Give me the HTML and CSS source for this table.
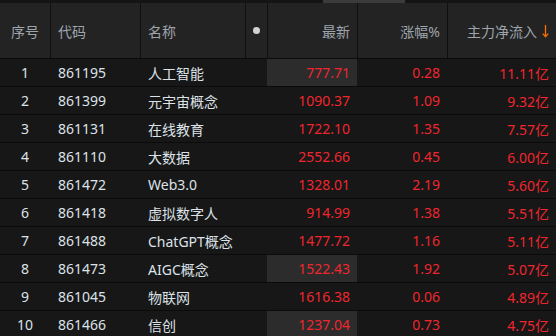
FILE: index.html
```html
<!DOCTYPE html>
<html lang="zh">
<head>
<meta charset="utf-8">
<link rel="stylesheet" href="styles.css">
</head>
<body>
<div class="board">
  <div class="hscroll"><div class="thumb"></div></div>
  <div class="row head">
    <div class="c c-idx">序号</div>
    <div class="c c-code sep">代码</div>
    <div class="c c-name sep">名称</div>
    <div class="c c-dot sep"><span class="dot"></span></div>
    <div class="c c-num sep">最新</div>
    <div class="c c-num sep">涨幅%</div>
    <div class="c c-num sep">主力净流入<svg class="arrow" width="7" height="14" viewBox="0 0 7 14"><path d="M3.5 1 V12.5 M0.8 9.6 L3.5 12.8 L6.2 9.6" fill="none" stroke="#ff6d00" stroke-width="1.3"/></svg></div>
  </div>
  <div class="row"><div class="c c-idx">1</div><div class="c c-code">861195</div><div class="c c-name">人工智能</div><div class="c c-dot"></div><div class="c c-num up hl">777.71</div><div class="c c-num up">0.28</div><div class="c c-num up">11.11亿</div></div>
  <div class="row"><div class="c c-idx">2</div><div class="c c-code">861399</div><div class="c c-name">元宇宙概念</div><div class="c c-dot"></div><div class="c c-num up">1090.37</div><div class="c c-num up">1.09</div><div class="c c-num up">9.32亿</div></div>
  <div class="row"><div class="c c-idx">3</div><div class="c c-code">861131</div><div class="c c-name">在线教育</div><div class="c c-dot"></div><div class="c c-num up">1722.10</div><div class="c c-num up">1.35</div><div class="c c-num up">7.57亿</div></div>
  <div class="row"><div class="c c-idx">4</div><div class="c c-code">861110</div><div class="c c-name">大数据</div><div class="c c-dot"></div><div class="c c-num up">2552.66</div><div class="c c-num up">0.45</div><div class="c c-num up">6.00亿</div></div>
  <div class="row"><div class="c c-idx">5</div><div class="c c-code">861472</div><div class="c c-name">Web3.0</div><div class="c c-dot"></div><div class="c c-num up">1328.01</div><div class="c c-num up">2.19</div><div class="c c-num up">5.60亿</div></div>
  <div class="row"><div class="c c-idx">6</div><div class="c c-code">861418</div><div class="c c-name">虚拟数字人</div><div class="c c-dot"></div><div class="c c-num up">914.99</div><div class="c c-num up">1.38</div><div class="c c-num up">5.51亿</div></div>
  <div class="row"><div class="c c-idx">7</div><div class="c c-code">861488</div><div class="c c-name">ChatGPT概念</div><div class="c c-dot"></div><div class="c c-num up">1477.72</div><div class="c c-num up">1.16</div><div class="c c-num up">5.11亿</div></div>
  <div class="row"><div class="c c-idx">8</div><div class="c c-code">861473</div><div class="c c-name">AIGC概念</div><div class="c c-dot"></div><div class="c c-num up hl">1522.43</div><div class="c c-num up">1.92</div><div class="c c-num up">5.07亿</div></div>
  <div class="row"><div class="c c-idx">9</div><div class="c c-code">861045</div><div class="c c-name">物联网</div><div class="c c-dot"></div><div class="c c-num up">1616.38</div><div class="c c-num up">0.06</div><div class="c c-num up">4.89亿</div></div>
  <div class="row"><div class="c c-idx">10</div><div class="c c-code">861466</div><div class="c c-name">信创</div><div class="c c-dot"></div><div class="c c-num up hl">1237.04</div><div class="c c-num up">0.73</div><div class="c c-num up">4.75亿</div></div>
</div>
</body>
</html>
```

FILE: styles.css
```css
html, body {
  margin: 0;
  padding: 0;
  background: #171717;
  overflow: hidden;
}
.board {
  width: 556px;
  height: 336px;
  overflow: hidden;
  font-family: "Noto Sans", "Noto Sans CJK SC", sans-serif;
  font-size: 14px;
  background: #171717;
}
.hscroll {
  height: 3px;
  background: #141414;
  position: relative;
}
.thumb {
  position: absolute;
  left: 323px;
  width: 82px;
  top: 0;
  height: 3px;
  background: #3b3b3b;
}
.row {
  display: grid;
  grid-template-columns: 50px 90px 105px 22px 90px 90px 109px;
  height: 28px;
  border-bottom: 1px solid #0b0b0b;
  box-sizing: border-box;
  color: #dde2e8;
}
.row.head {
  height: 56px;
  background: #232323;
  color: #9ea5ad;
}
.c {
  display: flex;
  align-items: center;
  box-sizing: border-box;
  white-space: nowrap;
}
.sep {
  border-left: 1px solid #0f0f0f;
}
.c-idx {
  justify-content: center;
}
.c-code, .c-name {
  padding-left: 8px;
}
.head .c-code, .head .c-name {
  padding-left: 7px;
}
.c-dot {
  justify-content: center;
}
.dot {
  width: 7px;
  height: 7px;
  border-radius: 50%;
  background: #d2d2d2;
}
.c-num {
  justify-content: flex-end;
  padding-right: 7px;
}
.up {
  color: #f0262e;
}
.hl {
  background: #2c2c2c;
}
.arrow {
  display: block;
  margin-left: 5px;
}
```
